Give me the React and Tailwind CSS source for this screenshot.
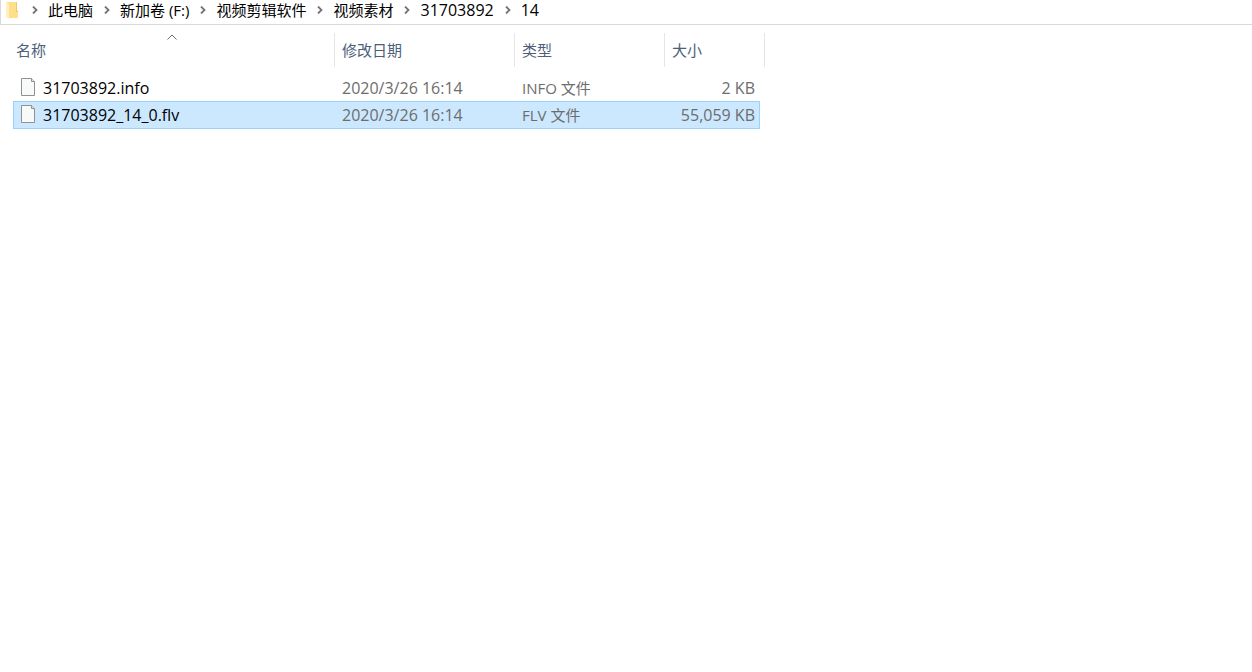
const crumbs = [
  { name: '此电脑' },
  { name: '新加卷 (F:)' },
  { name: '视频剪辑软件' },
  { name: '视频素材' },
  { name: '31703892', latin: true },
  { name: '14', latin: true }
]

const columns = [
  { label: '名称', padding: 'pl-[3px]', sorted: true },
  { label: '修改日期', padding: 'pl-[7px]' },
  { label: '类型', padding: 'pl-[7px]' },
  { label: '大小', padding: 'pl-[7px]', last: true }
]

const files = [
  { name: '31703892.info', date: '2020/3/26 16:14', type: 'INFO 文件', size: '2 KB' },
  { name: '31703892_14_0.flv', date: '2020/3/26 16:14', type: 'FLV 文件', size: '55,059 KB', selected: true }
]

function FolderIcon() {
  return (
    <svg className="h-5 w-3 shrink-0" viewBox="0 0 12 20" aria-hidden="true">
      <path d="M1 2h10v9h1v7H1z" fill="#ffe08a" />
      <path d="M10 2h1v9h1v1h-2z" fill="#efc766" />
      <path d="M0 2l3 2v15l-3-2z" fill="#fff0bd" />
    </svg>
  )
}

function Chevron() {
  return (
    <svg className="h-2 w-[6px] shrink-0" viewBox="0 0 6 8" fill="none" aria-hidden="true">
      <path d="M1 .5L4.5 4 1 7.5" stroke="#737373" strokeWidth="1.8" />
    </svg>
  )
}

function FileIcon() {
  return (
    <svg className="h-[18px] w-[14px] shrink-0" viewBox="0 0 14 18" fill="none" aria-hidden="true">
      <path d="M.5.5h10l3 3v14H.5z" fill="#f8f9f9" stroke="#8f9192" />
      <path d="M10.5.5v3h3" fill="#e4e4e4" stroke="#8f9192" />
    </svg>
  )
}

function Breadcrumb() {
  return (
    <nav aria-label="路径" className="flex h-[25px] items-center border-b border-l border-[#d9d9d9] pb-1 pl-[5px]">
      <FolderIcon />
      <ol className="flex items-center pl-[3px]">
        {crumbs.map((crumb) => (
          <li key={crumb.name} className="flex items-center gap-[10px] pl-[11px]">
            <Chevron />
            <button type="button" className={crumb.latin ? 'text-base leading-5' : 'text-[15px] leading-5'}>
              {crumb.name}
            </button>
          </li>
        ))}
      </ol>
    </nav>
  )
}

function FileRow({ file }) {
  const cell = file.selected ? 'h-7 border-y border-[#99d1ff] bg-[#cce8ff]' : 'h-[27px] border-t border-transparent'

  return (
    <tr aria-selected={Boolean(file.selected)}>
      <td className={`${cell} border-l pl-[7px] text-black`}>
        <div className="flex items-start gap-2">
          <FileIcon />
          {file.name}
        </div>
      </td>
      <td className={`${cell} pl-[7px]`}>{file.date}</td>
      <td className={`${cell} pl-[7px] text-[15px]`}>{file.type}</td>
      <td className={`${cell} border-r pr-1 text-right`}>{file.size}</td>
    </tr>
  )
}

function FileList() {
  return (
    <table className="mt-2 ml-[13px] w-[747px] table-fixed border-separate border-spacing-0 text-base leading-5 text-[#6d6d6d]">
      <colgroup>
        <col className="w-[322px]" />
        <col className="w-[180px]" />
        <col className="w-[150px]" />
        <col />
      </colgroup>
      <thead>
        <tr>
          {columns.map((column) => (
            <th key={column.label} className="pb-[7px] text-left font-normal text-[#4c607a]">
              <div className={column.last ? '-mr-[5px] border-r border-[#e5e5e5]' : 'relative border-r border-[#e5e5e5]'}>
                <button type="button" className={`${column.padding} block h-[34px] w-full text-left text-[15px]`}>
                  {column.label}
                </button>
                {column.sorted && (
                  <span className="pointer-events-none absolute top-px right-0 -left-1 flex justify-center">
                    <svg className="h-[6px] w-[10px]" viewBox="0 0 10 6" fill="none" aria-hidden="true">
                      <path d="M.5 5.5L5 1l4.5 4.5" stroke="#6d6d6d" />
                    </svg>
                  </span>
                )}
              </div>
            </th>
          ))}
        </tr>
      </thead>
      <tbody>
        {files.map((file) => (
          <FileRow key={file.name} file={file} />
        ))}
      </tbody>
    </table>
  )
}

function App() {
  return (
    <main className="min-h-screen bg-white font-['Open_Sans','Noto_Sans_CJK_SC',sans-serif] text-black">
      <Breadcrumb />
      <FileList />
    </main>
  )
}

export default App
